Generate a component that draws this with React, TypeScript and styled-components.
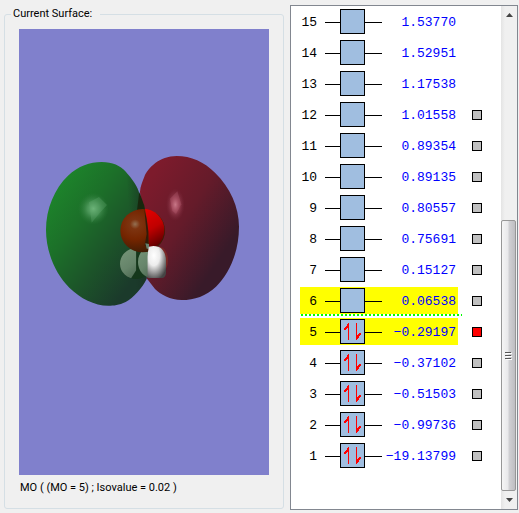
import React, { useState } from "react";
import styled, { createGlobalStyle } from "styled-components";

const GlobalStyle = createGlobalStyle`
  *, *::before, *::after { box-sizing: border-box; }
  body {
    margin: 0;
    background: #f0f0f0;
    color: #000;
    font: 11px/14px Roboto, Tahoma, sans-serif;
  }
`;

const Page = styled.main`
  display: flex;
  gap: 6px;
  min-height: 100vh;
  padding: 5px 1px 3px 4px;
`;

const SurfaceGroup = styled.fieldset`
  flex: 1;
  min-width: 0;
  display: flex;
  flex-direction: column;
  margin: 2px 0 1px;
  padding: 8px 14px 13px;
  border: 1px solid #d5dfe5;
  border-radius: 3px;
`;

const GroupTitle = styled.legend`
  margin-left: -8px;
  padding: 0 8px 0 2px;
`;

const Viewport = styled.svg`
  display: block;
  flex: 1;
  width: 100%;
  min-height: 0;
  background: #8080cc;
`;

const Caption = styled.p`
  margin: 6px 0 0;
  padding-left: 1px;
`;

const OrbitalPanel = styled.section`
  display: flex;
  flex: 0 0 228px;
  border: 1px solid #828790;
  background: #fff;
`;

const TableArea = styled.div`
  flex: 1;
  padding-left: 9px;
`;

const OrbitalTable = styled.table`
  width: 100%;
  table-layout: fixed;
  border-collapse: collapse;
  font: 13px/29px "Liberation Mono", "Courier New", monospace;
`;

const Row = styled.tr`
  height: 31px;
`;

const Cell = styled.td`
  position: relative;
  padding: 2px 0;
`;

const Band = styled.div<{ $lit: boolean }>`
  height: 27px;
  text-align: right;
  background: ${(p) => (p.$lit ? "#ffff00" : "transparent")};
`;

const NumberBand = styled(Band)`
  padding-right: 8px;
`;

const EnergyBand = styled(Band)`
  padding-right: 2px;
  color: #0000ff;
`;

const Diagram = styled.svg`
  display: block;
`;

const FermiLine = styled.div`
  position: absolute;
  left: 1px;
  bottom: 0;
  width: 161px;
  height: 2px;
  background: repeating-linear-gradient(90deg, #00ff00 0 2px, transparent 2px 4px);
`;

const Marker = styled.input`
  appearance: none;
  display: block;
  width: 10px;
  height: 10px;
  margin: 1px 0 0 14px;
  border: 1px solid #000;
  background: #c0c0c0;
  &:checked { background: #ff0000; }
`;

const ScrollBar = styled.div`
  flex: 0 0 16px;
  display: flex;
  flex-direction: column;
  background: linear-gradient(90deg, #e4e4e4, #f0f0f0 4px, #f0f0f0);
`;

const ArrowButton = styled.button`
  display: grid;
  place-items: center;
  height: 18px;
  padding: 0;
  border: 0;
  background: transparent;
`;

const Track = styled.div`
  flex: 1;
  display: flex;
  flex-direction: column;
`;

const TrackGap = styled.div`
  flex: 197;
`;

const Thumb = styled.div`
  flex: 270;
  display: grid;
  place-items: center;
  margin-right: 1px;
  border: 1px solid #979797;
  border-radius: 2px;
  background: linear-gradient(90deg, #f5f5f5, #e9e9eb 45%, #d0d0d3 55%, #bebec2);
`;

type Orbital = { n: number; energy: string };

const orbitals: Orbital[] = [
  { n: 15, energy: "1.53770" },
  { n: 14, energy: "1.52951" },
  { n: 13, energy: "1.17538" },
  { n: 12, energy: "1.01558" },
  { n: 11, energy: "0.89354" },
  { n: 10, energy: "0.89135" },
  { n: 9, energy: "0.80557" },
  { n: 8, energy: "0.75691" },
  { n: 7, energy: "0.15127" },
  { n: 6, energy: "0.06538" },
  { n: 5, energy: "−0.29197" },
  { n: 4, energy: "−0.37102" },
  { n: 3, energy: "−0.51503" },
  { n: 2, energy: "−0.99736" },
  { n: 1, energy: "−19.13799" },
];

const HOMO = 5;
const LUMO = 6;
const LAST_COMPUTED = 12;

function LevelDiagram({ occupied }: { occupied: boolean }) {
  return (
    <Diagram width="57" height="27" viewBox="0 0 57 27" shapeRendering="crispEdges" aria-hidden="true">
      <path d="M0 14.5H57" stroke="#000" />
      <rect x="15.5" y="1.5" width="24" height="24" fill="#a0bee0" stroke="#000" />
      {occupied && (
        <g fill="#ff0000">
          <path d="M23 5h1v17h-1v-12h-1v1h-1v1h-2v-2h1v-1h1v-1h1v-2h1z" />
          <path d="M31 5h1v12h1v-1h1v-1h2v2h-1v1h-1v2h-1v1h-1v1h-1z" />
        </g>
      )}
    </Diagram>
  );
}

function MolecularSurface() {
  return (
    <Viewport viewBox="0 0 250 446" role="img" aria-label="Molecular orbital surface">
      <defs>
        <linearGradient id="green" x1="0.1" y1="0.1" x2="0.82" y2="0.85">
          <stop offset="0" stopColor="#1d872b" />
          <stop offset="0.35" stopColor="#1c7029" />
          <stop offset="0.68" stopColor="#1c5429" />
          <stop offset="1" stopColor="#1b3a2b" />
        </linearGradient>
        <linearGradient id="shade" x1="0.62" y1="0.5" x2="1" y2="0.4">
          <stop offset="0" stopColor="#18281f" stopOpacity="0" />
          <stop offset="1" stopColor="#18281f" stopOpacity="0.6" />
        </linearGradient>
        <linearGradient id="red" x1="0.15" y1="0.1" x2="0.8" y2="0.72">
          <stop offset="0" stopColor="#7d1b2c" />
          <stop offset="0.5" stopColor="#651b2a" />
          <stop offset="1" stopColor="#381a29" />
        </linearGradient>
        <radialGradient id="greenGlow">
          <stop offset="0" stopColor="#70b87c" />
          <stop offset="0.4" stopColor="#529c60" stopOpacity="0.8" />
          <stop offset="1" stopColor="#2c7a39" stopOpacity="0" />
        </radialGradient>
        <radialGradient id="redGlow">
          <stop offset="0" stopColor="#d08090" />
          <stop offset="0.4" stopColor="#a64b5e" stopOpacity="0.8" />
          <stop offset="1" stopColor="#78283a" stopOpacity="0" />
        </radialGradient>
        <radialGradient id="brown" cx="0.33" cy="0.35" r="0.7">
          <stop offset="0" stopColor="#947052" />
          <stop offset="0.16" stopColor="#7d3410" />
          <stop offset="0.5" stopColor="#752500" />
          <stop offset="1" stopColor="#3c1c05" />
        </radialGradient>
        <linearGradient id="oxygen" x1="0.4" y1="0.1" x2="0.9" y2="0.9">
          <stop offset="0" stopColor="#e60000" />
          <stop offset="0.5" stopColor="#c00000" />
          <stop offset="1" stopColor="#500000" />
        </linearGradient>
        <radialGradient id="hydrogen" cx="0.35" cy="0.3" r="0.78">
          <stop offset="0" stopColor="#fff" />
          <stop offset="0.4" stopColor="#ececec" />
          <stop offset="1" stopColor="#454545" />
        </radialGradient>
        <linearGradient id="veiled" x2="0.8" y2="1">
          <stop offset="0" stopColor="#769679" />
          <stop offset="0.5" stopColor="#66846a" />
          <stop offset="1" stopColor="#3c5742" />
        </linearGradient>
        <clipPath id="rightSide">
          <path d="M344 200L350 235L355 275L357 315L352 350V420H430V200Z" />
        </clipPath>
        <clipPath id="leftH"><path d="M260 320H319V390L300 420H260Z" /></clipPath>
      </defs>
      <g transform="translate(11 111) scale(0.33333)">
        <path fill="url(#red)" d="M330 155C331 139 337 125 343 110C354 84 388 48 440 48C483 48 523 66 555 98C601 142 627 202 627 260C627 335 599 400 558 440C528 468 494 480 455 480C421 480 391 463 375 447L350 415Z" />
        <path fill="url(#green)" d="M215 66C248 66 271 77 286 94C307 117 323 141 328 161L343 204L351 239L356 283L357 325L352 380L350 416C337 444 310 473 287 486C267 496 252 497 235 497C193 497 151 475 118 443C77 403 48 336 48 270C48 206 74 145 114 107C145 78 180 66 215 66Z" />
        <path fill="url(#shade)" d="M215 66C248 66 271 77 286 94C307 117 323 141 328 161L343 204L351 239L356 283L357 325L352 380L350 416C337 444 310 473 287 486C267 496 252 497 235 497Z" />
        <ellipse cx="190" cy="206" rx="46" ry="48" fill="url(#greenGlow)" />
        <path d="M177 187L207 171L231 195L209 219L185 248Z" fill="#62a96f" opacity="0.3" />
        <ellipse cx="436" cy="194" rx="28" ry="49" fill="url(#redGlow)" />
        <path d="M420 176L442 154L454 193L438 222L427 212Z" fill="#bb6577" opacity="0.3" />
        <path fill="#17270d" d="M328 156L343 197L350 242L320 220Z" />
        <ellipse cx="390" cy="361" rx="24" ry="40" fill="#792725" />
        <ellipse cx="318" cy="371" rx="48" ry="46" fill="#15371b" />
        <ellipse cx="318" cy="371" rx="48" ry="46" fill="url(#veiled)" clipPath="url(#leftH)" />
        <path d="M345 309L357 311V330H350Z" fill="#66806d" />
        <ellipse cx="366" cy="366" rx="42" ry="48" fill="url(#veiled)" />
        <ellipse cx="338" cy="272" rx="67" ry="65" fill="url(#brown)" />
        <ellipse cx="338" cy="270" rx="65" ry="64" fill="url(#oxygen)" clipPath="url(#rightSide)" />
        <path d="M343 207L350 237L355 274V320L344 317L350 282Z" fill="#321c08" />
        <path d="M346 310L357 312V326H350Z" fill="#66806d" />
        <path clipPath="url(#rightSide)" fill="url(#hydrogen)" d="M370 318C398 318 408 339 408 366V395C408 407 404 414 392 414H352V321Z" />
      </g>
    </Viewport>
  );
}

export default function App() {
  const [shown, setShown] = useState(HOMO);

  return (
    <>
      <GlobalStyle />
      <Page>
        <SurfaceGroup>
          <GroupTitle>Current Surface:</GroupTitle>
          <MolecularSurface />
          <Caption>MO ( (MO = 5) ; Isovalue = 0.02 )</Caption>
        </SurfaceGroup>
        <OrbitalPanel aria-label="Molecular orbitals">
          <TableArea>
            <OrbitalTable>
              <colgroup>
                <col width="25" />
                <col width="57" />
                <col width="76" />
                <col />
              </colgroup>
              <tbody>
                {orbitals.map(({ n, energy }) => {
                  const lit = n === HOMO || n === LUMO;
                  return (
                    <Row key={n}>
                      <Cell>
                        <NumberBand $lit={lit}>{n}</NumberBand>
                        {n === LUMO && <FermiLine />}
                      </Cell>
                      <Cell>
                        <Band $lit={lit}><LevelDiagram occupied={n <= HOMO} /></Band>
                      </Cell>
                      <Cell>
                        <EnergyBand $lit={lit}>{energy}</EnergyBand>
                      </Cell>
                      <Cell>
                        {n <= LAST_COMPUTED && (
                          <Marker
                            type="radio"
                            name="surface"
                            aria-label={`Show orbital ${n}`}
                            checked={shown === n}
                            onChange={() => setShown(n)}
                          />
                        )}
                      </Cell>
                    </Row>
                  );
                })}
              </tbody>
            </OrbitalTable>
          </TableArea>
          <ScrollBar>
            <ArrowButton type="button" aria-label="Scroll up">
              <svg width="7" height="4" viewBox="0 0 7 4"><path d="M0 4L3.500 0L7 4Z" fill="#444" /></svg>
            </ArrowButton>
            <Track>
              <TrackGap />
              <Thumb>
                <svg width="7" height="9" viewBox="0 0 7 9" shapeRendering="crispEdges">
                  <path d="M0 1.500H6M0 4.500H6M0 7.500H6" stroke="#555" />
                  <path d="M1 2.500H7M1 5.500H7M1 8.500H7" stroke="#fff" />
                </svg>
              </Thumb>
            </Track>
            <ArrowButton type="button" aria-label="Scroll down">
              <svg width="7" height="4" viewBox="0 0 7 4"><path d="M0 0L3.500 4L7 0Z" fill="#444" /></svg>
            </ArrowButton>
          </ScrollBar>
        </OrbitalPanel>
      </Page>
    </>
  );
}
